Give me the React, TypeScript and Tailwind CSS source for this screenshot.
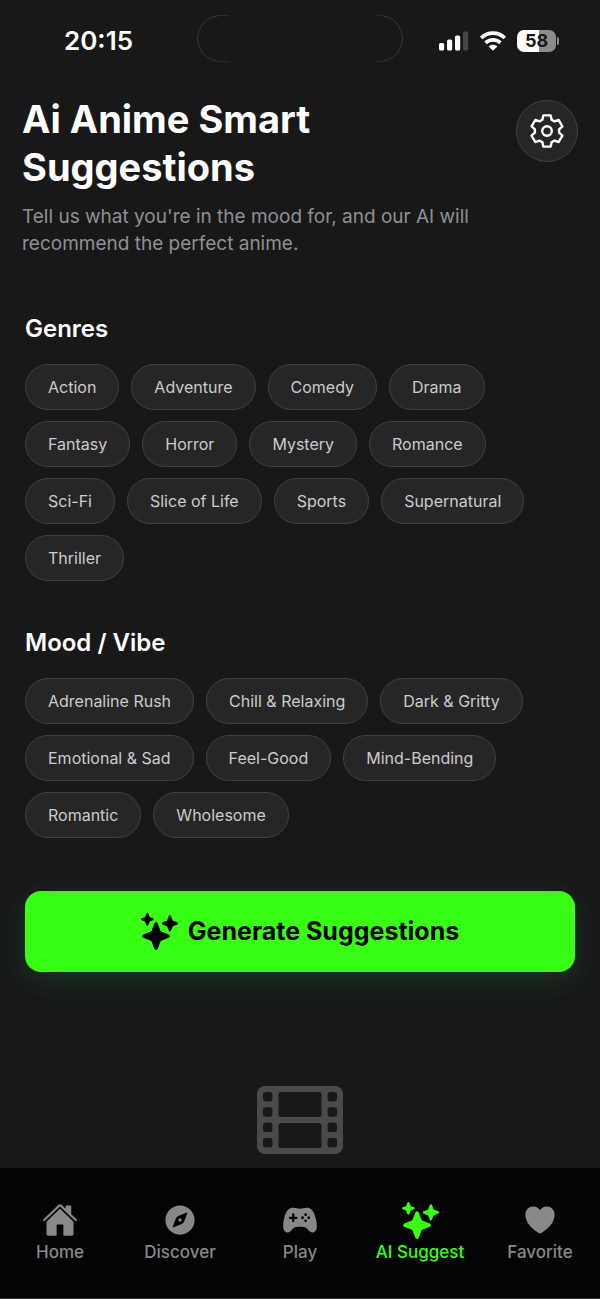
import type { ComponentType } from "react";
import {
  IoCompass,
  IoGameController,
  IoHeart,
  IoHome,
  IoSparkles,
} from "react-icons/io5";

const genres = [
  "Action", "Adventure", "Comedy", "Drama", "Fantasy", "Horror", "Mystery",
  "Romance", "Sci-Fi", "Slice of Life", "Sports", "Supernatural", "Thriller",
];

const moods = [
  "Adrenaline Rush", "Chill & Relaxing", "Dark & Gritty", "Emotional & Sad",
  "Feel-Good", "Mind-Bending", "Romantic", "Wholesome",
];

type Tab = { label: string; icon: ComponentType<{ className?: string }>; active?: boolean };

const tabs: Tab[] = [
  { label: "Home", icon: IoHome },
  { label: "Discover", icon: IoCompass },
  { label: "Play", icon: IoGameController },
  { label: "AI Suggest", icon: IoSparkles, active: true },
  { label: "Favorite", icon: IoHeart },
];

function Signal() {
  return (
    <svg className="h-5 w-8" viewBox="0 0 32 20" fill="white" aria-hidden="true">
      <rect x="2" y="12" width="5.2" height="7.5" rx="1.6" />
      <rect x="10" y="8.5" width="5.2" height="11" rx="1.6" />
      <rect x="18" y="4.5" width="5.2" height="15" rx="1.6" />
      <rect x="26" y="0.5" width="5.2" height="19" rx="1.6" fill="#464646" />
    </svg>
  );
}

function Wifi() {
  return (
    <svg className="h-5 w-7" viewBox="0 0 28 20" fill="none" stroke="white" strokeWidth="3.8" aria-hidden="true">
      <path d="M2.2 7C8.7.6 19.3.6 25.8 7" />
      <path d="M6.6 11.8C10.8 7.8 17.2 7.8 21.4 11.8" />
      <path d="M14 19.8l-4.4-4.4c2.5-2.3 6.3-2.3 8.8 0z" fill="white" stroke="none" />
    </svg>
  );
}

function Battery() {
  return (
    <div className="flex items-center gap-px">
      <div className="flex h-[22px] w-[39px] items-center justify-center rounded-[7px] bg-linear-to-r from-white from-57% to-[#8c8c8c] to-57% text-lg font-bold text-[#181818]">
        58
      </div>
      <div className="h-2 w-[2px] rounded-r-full bg-[#8c8c8c]" />
    </div>
  );
}

function Gear({ className }: { className?: string }) {
  return (
    <svg
      className={className}
      viewBox="-18 -18 36 36"
      fill="none"
      stroke="currentColor"
      strokeWidth="2.4"
      strokeLinejoin="round"
      aria-hidden="true"
    >
      <path d="M-3.7-15.6H3.7L4.6-11.3 7.5-9.6 11.7-11 15.4-4.6 12.1-1.7V1.7L15.4 4.6 11.7 11 7.5 9.6 4.6 11.3 3.7 15.6H-3.7L-4.6 11.3-7.5 9.6-11.7 11-15.4 4.6-12.1 1.7V-1.7L-15.4-4.6-11.7-11-7.5-9.6-4.6-11.3Z" />
      <circle r="4.8" />
    </svg>
  );
}

function FilmStrip({ className }: { className?: string }) {
  const holes = [6, 21.3, 36.6, 51.9];
  return (
    <svg className={className} viewBox="0 0 86 68" aria-hidden="true">
      <rect width="86" height="68" rx="8" fill="currentColor" />
      <g fill="#181818">
        {holes.map((y) => (
          <g key={y}>
            <rect x="6" y={y} width="9.4" height="9.4" rx="2.6" />
            <rect x="70.6" y={y} width="9.4" height="9.4" rx="2.6" />
          </g>
        ))}
        <rect x="21.5" y="6" width="43" height="25" rx="2.6" />
        <rect x="21.5" y="37" width="43" height="25" rx="2.6" />
      </g>
    </svg>
  );
}

function ChipGroup({ title, items }: { title: string; items: string[] }) {
  return (
    <section className="px-[25px]">
      <h2 className="text-2xl/[30px] font-semibold">{title}</h2>
      <div className="mt-5 flex flex-wrap gap-x-3 gap-y-[11px]">
        {items.map((item) => (
          <button
            key={item}
            type="button"
            className="h-[46px] rounded-full border border-[#404040] bg-[#262626] px-[22px] text-base text-[#cccccc]"
          >
            {item}
          </button>
        ))}
      </div>
    </section>
  );
}

export default function App() {
  return (
    <div className="flex min-h-screen flex-col bg-[#181818] font-['Inter','Liberation_Sans',sans-serif] text-white">
      <div className="grid grid-cols-[1fr_206px_1fr] items-center pt-[15px]">
        <time className="pl-16 pt-1 text-[26px]/8 font-semibold">20:15</time>
        <div className="h-[47px] rounded-full border border-[#3c3c3c] mask-[linear-gradient(to_right,black_10%,transparent_17%,transparent_85%,black_91%)]" />
        <div className="flex items-center justify-end gap-[10px] pr-[41px] pt-1">
          <Signal />
          <Wifi />
          <Battery />
        </div>
      </div>

      <header className="mt-[33px] flex items-start justify-between px-[22px]">
        <div className="max-w-[460px]">
          <h1 className="max-w-[340px] text-[38px]/[48px] font-bold">Ai Anime Smart Suggestions</h1>
          <p className="mt-3 text-[19px]/[27px] text-[#8e9196]">
            Tell us what you're in the mood for, and our AI will recommend the perfect anime.
          </p>
        </div>
        <button
          type="button"
          aria-label="Settings"
          className="mt-[5px] flex size-[62px] items-center justify-center rounded-full border border-[#404040] bg-[#262626]"
        >
          <Gear className="size-9" />
        </button>
      </header>

      <main className="mt-[57px] flex flex-col">
        <ChipGroup title="Genres" items={genres} />
        <div className="mt-[47px]">
          <ChipGroup title="Mood / Vibe" items={moods} />
        </div>
        <div className="mt-[53px] px-[25px]">
          <button
            type="button"
            className="flex h-[81px] w-full items-center justify-center gap-[10px] rounded-2xl bg-[#39ff14] text-[25px] font-bold text-black shadow-[0_8px_30px_rgba(30,140,80,0.25)]"
          >
            <IoSparkles className="size-[37px]" />
            Generate Suggestions
          </button>
        </div>
        <FilmStrip className="mt-[114px] mb-[14px] h-[68px] w-[86px] self-center text-[#4a4a4a]" />
      </main>

      <nav className="grid h-[131px] grid-cols-5 border-b border-[#3a3838] bg-[#040404]">
        {tabs.map(({ label, icon: Icon, active }) => (
          <a
            key={label}
            href="#"
            aria-current={active ? "page" : undefined}
            className={
              active
                ? "flex flex-col items-center pt-8 text-[#39ff14]"
                : "flex flex-col items-center pt-8 text-[#888888]"
            }
          >
            <span className="flex h-10 items-center">
              <Icon className={active ? "size-[37px]" : "size-9"} />
            </span>
            <span className="text-[17px]/6 font-medium">{label}</span>
          </a>
        ))}
      </nav>
    </div>
  );
}
